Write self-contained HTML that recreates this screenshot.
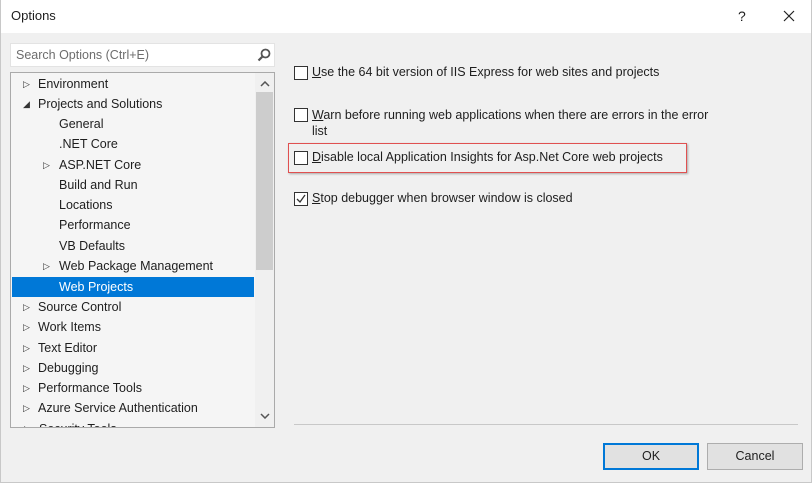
<!DOCTYPE html><html><head><style>
body{margin:0;width:812px;height:484px;overflow:hidden;background:#fff;font-family:"Liberation Sans",sans-serif;font-size:12.5px;color:#1e1e1e}
.win{position:absolute;left:0;top:0;width:810px;height:482px;border:1px solid #c8c8c8;border-top:none;background:#f0f0f0}
.title{position:absolute;left:0;top:0;width:810px;height:33px;background:#fff}
.abs{position:absolute}
.row{position:absolute;left:11px;width:242px;height:20px;line-height:20px;white-space:nowrap}
.tri{position:absolute;font-size:9px;color:#333}
.cb{position:absolute;left:293px;width:12px;height:12px;border:1px solid #333;background:#fff}
.lbl{position:absolute;left:311px;white-space:nowrap;font-size:12.5px}
.btn{position:absolute;top:443px;height:25px;background:#e1e1e1;border:1px solid #adadad;text-align:center;line-height:25px}
</style></head><body><div class="win">
<div class="title"><span class="abs" style="left:10px;top:8px;font-size:13px">Options</span>
<span class="abs" style="left:737px;top:8px;font-size:14px">?</span>
<svg class="abs" style="left:782px;top:10px" width="12" height="12"><path d="M1 1L11 11M11 1L1 11" stroke="#222" stroke-width="1.2"/></svg></div>
<div class="abs" style="left:9px;top:43px;width:263px;height:22px;background:#fff;border:1px solid #e3e3e3"><span class="abs" style="left:5px;top:4px;color:#6d6d6d">Search Options (Ctrl+E)</span>
<svg class="abs" style="left:246px;top:4px" width="14" height="14"><circle cx="8.5" cy="5.5" r="4" fill="none" stroke="#555" stroke-width="1.8"/><path d="M6 8L1.5 12.5" stroke="#555" stroke-width="2.2"/></svg></div>
<div class="abs" style="left:9px;top:72px;width:263px;height:354px;background:#f5f5f5;border:1px solid #aaa;overflow:hidden">
<div class="abs" style="left:244px;top:0;width:19px;height:354px;background:#f0f0f0"></div>
<div class="abs" style="left:245px;top:19px;width:17px;height:178px;background:#cdcdcd"></div>
<svg class="abs" style="left:249px;top:8px" width="10" height="6"><path d="M1 5L5 1L9 5" fill="none" stroke="#555" stroke-width="1.5"/></svg>
<svg class="abs" style="left:249px;top:340px" width="10" height="6"><path d="M1 1L5 5L9 1" fill="none" stroke="#555" stroke-width="1.5"/></svg>
<div class="abs" style="left:2px;top:346px;width:240px;height:20px;line-height:20px;white-space:nowrap"><span class="tri" style="left:11px">▷</span><span style="margin-left:26px">Security Tools</span></div>
</div>
<div class="abs" style="left:11px;top:277px;width:242px;height:20px;background:#0078d7"></div>
<div style="position:absolute;left:0;top:0">
<div class="row" style="top:74px"><span class="tri" style="left:11px">▷</span><span style="margin-left:26px">Environment</span></div>
<div class="row" style="top:94px"><span class="tri" style="left:11px">◢</span><span style="margin-left:26px">Projects and Solutions</span></div>
<div class="row" style="top:114px"><span style="margin-left:47px">General</span></div>
<div class="row" style="top:134px"><span style="margin-left:47px">.NET Core</span></div>
<div class="row" style="top:155px"><span class="tri" style="left:31px">▷</span><span style="margin-left:47px">ASP.NET Core</span></div>
<div class="row" style="top:175px"><span style="margin-left:47px">Build and Run</span></div>
<div class="row" style="top:195px"><span style="margin-left:47px">Locations</span></div>
<div class="row" style="top:215px"><span style="margin-left:47px">Performance</span></div>
<div class="row" style="top:236px"><span style="margin-left:47px">VB Defaults</span></div>
<div class="row" style="top:256px"><span class="tri" style="left:31px">▷</span><span style="margin-left:47px">Web Package Management</span></div>
<div class="row" style="top:277px;color:#fff"><span style="margin-left:47px">Web Projects</span></div>
<div class="row" style="top:297px"><span class="tri" style="left:11px">▷</span><span style="margin-left:26px">Source Control</span></div>
<div class="row" style="top:317px"><span class="tri" style="left:11px">▷</span><span style="margin-left:26px">Work Items</span></div>
<div class="row" style="top:338px"><span class="tri" style="left:11px">▷</span><span style="margin-left:26px">Text Editor</span></div>
<div class="row" style="top:358px"><span class="tri" style="left:11px">▷</span><span style="margin-left:26px">Debugging</span></div>
<div class="row" style="top:378px"><span class="tri" style="left:11px">▷</span><span style="margin-left:26px">Performance Tools</span></div>
<div class="row" style="top:398px"><span class="tri" style="left:11px">▷</span><span style="margin-left:26px">Azure Service Authentication</span></div>
</div>
<div class="cb" style="top:66px"></div><div class="lbl" style="top:65px"><u>U</u>se the 64 bit version of IIS Express for web sites and projects</div>
<div class="cb" style="top:108px"></div><div class="lbl" style="top:107px;line-height:16px"><u>W</u>arn before running web applications when there are errors in the error<br>list</div>
<div class="abs" style="left:287px;top:143px;width:397px;height:28px;border:1px solid #e05050;box-shadow:1px 1px 2px #aaa"></div>
<div class="cb" style="top:151px"></div><div class="lbl" style="top:150px"><u>D</u>isable local Application Insights for Asp.Net Core web projects</div>
<div class="cb" style="top:192px"></div><svg class="abs" style="left:295px;top:194px" width="10" height="10"><path d="M1 5L4 8L9 1" fill="none" stroke="#333" stroke-width="1.3"/></svg><div class="lbl" style="top:191px"><u>S</u>top debugger when browser window is closed</div>
<div class="abs" style="left:293px;top:424px;width:504px;height:1px;background:#c8c8c8"></div>
<div class="btn" style="left:602px;width:92px;border:2px solid #0078d7;height:23px;line-height:23px">OK</div>
<div class="btn" style="left:706px;width:94px">Cancel</div>
</div></body></html>
